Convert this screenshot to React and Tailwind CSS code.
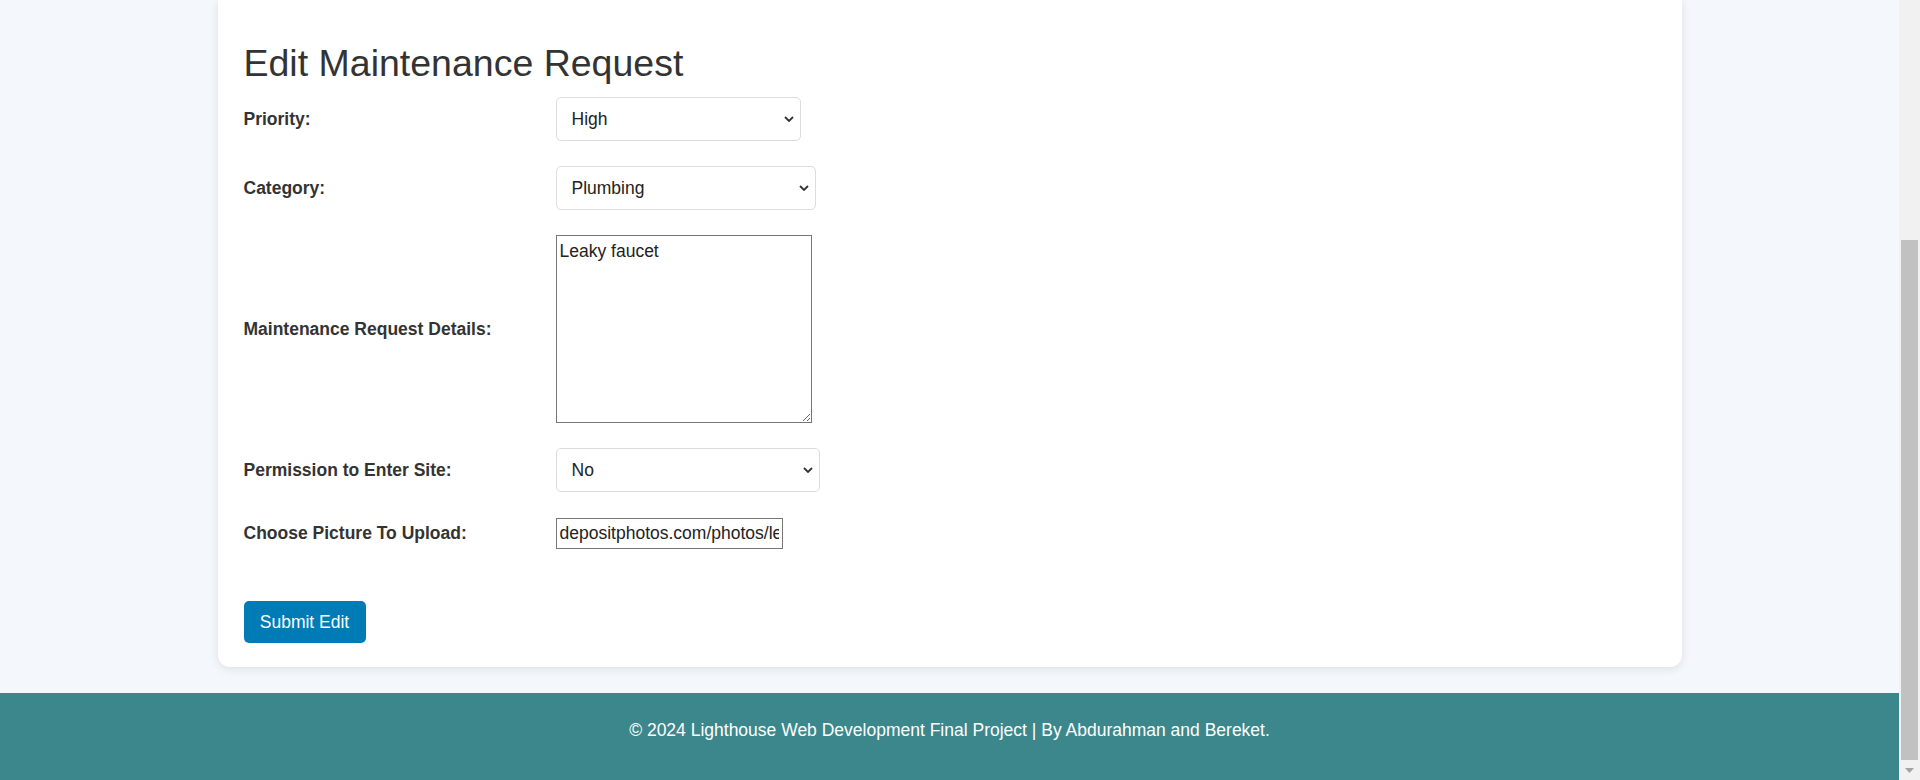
import React from 'react';

const Chevron = () => (
  <svg
    className="pointer-events-none absolute right-[7px] top-1/2 -translate-y-1/2 w-[10px] h-[6px] text-[#333]"
    viewBox="0 0 10 6"
    fill="none"
    stroke="currentColor"
    strokeWidth={1.8}
  >
    <path d="M1 1l4 4 4-4" />
  </svg>
);

const SelectField = ({ value, options, width }) => (
  <div className={`relative ${width}`}>
    <select
      defaultValue={value}
      className="appearance-none w-full h-[44px] pl-[15px] pr-[24px] bg-white border border-[#dcdcdc] rounded-[5px] text-[17.5px] text-[#222] outline-none"
    >
      {options.map((o) => (
        <option key={o}>{o}</option>
      ))}
    </select>
    <Chevron />
  </div>
);

const Row = ({ label, children, className = '' }) => (
  <div className={`flex items-center ${className}`}>
    <label className="w-[312px] shrink-0 text-[17.5px] font-bold text-[#333]">{label}</label>
    {children}
  </div>
);

export default function App() {
  return (
    <div className="flex w-[1920px] h-[780px] overflow-hidden bg-[#f4f7fc] font-['Liberation_Sans',Arial,sans-serif]">
      <div className="flex flex-col flex-1">
        {/* Card */}
        <div className="mx-auto w-[1464px] bg-white rounded-b-[12px] shadow-[0_2px_10px_rgba(0,0,0,0.1)] pl-[26px] pt-[42px] pb-[24px]">
          <h2 className="text-[37.5px] leading-[43px] text-[#333]">Edit Maintenance Request</h2>

          <form className="mt-[12px] flex flex-col gap-[25px]">
            <Row label="Priority:">
              <SelectField value="High" options={['Low', 'Medium', 'High']} width="w-[245px]" />
            </Row>
            <Row label="Category:">
              <SelectField
                value="Plumbing"
                options={['Plumbing', 'Electrical', 'Appliances', 'Heating']}
                width="w-[260px]"
              />
            </Row>
            <Row label="Maintenance Request Details:">
              <textarea
                defaultValue="Leaky faucet"
                className="w-[256px] h-[188px] border border-[#767676] pl-[3px] pr-[2px] pt-[5px] text-[17.5px] leading-[20px] text-[#222] outline-none bg-white"
              />
            </Row>
            <Row label="Permission to Enter Site:">
              <SelectField value="No" options={['Yes', 'No']} width="w-[264px]" />
            </Row>
            <Row label="Choose Picture To Upload:" className="mt-px">
              <input
                type="text"
                readOnly
                defaultValue="depositphotos.com/photos/leaky-faucet.html"
                className="w-[227px] h-[31px] border border-[#767676] px-[3px] text-[17.5px] text-[#222] outline-none bg-white"
              />
            </Row>
          </form>

          <button
            type="button"
            className="mt-[52px] w-[122px] h-[42px] rounded-[5px] bg-[#007bb5] text-white text-[17.5px]"
          >
            Submit Edit
          </button>
        </div>

        {/* Footer */}
        <footer className="mt-[26px] h-[87px] bg-[#3c878b] pt-[27px] text-center text-white text-[17.5px] leading-[20px]">
          © 2024 Lighthouse Web Development Final Project | By Abdurahman and Bereket.
        </footer>
      </div>

      {/* Scrollbar */}
      <div className="flex flex-col w-[21px] bg-[#f1f1f1]">
        <div className="mt-[240px] mx-[2px] h-[520px] bg-[#c1c1c1]" />
        <div className="flex flex-1 items-center justify-center">
          <svg className="w-[9px] h-[5px]" viewBox="0 0 9 5">
            <path d="M0 0h9L4.5 5z" fill="#a3a3a3" />
          </svg>
        </div>
      </div>
    </div>
  );
}
